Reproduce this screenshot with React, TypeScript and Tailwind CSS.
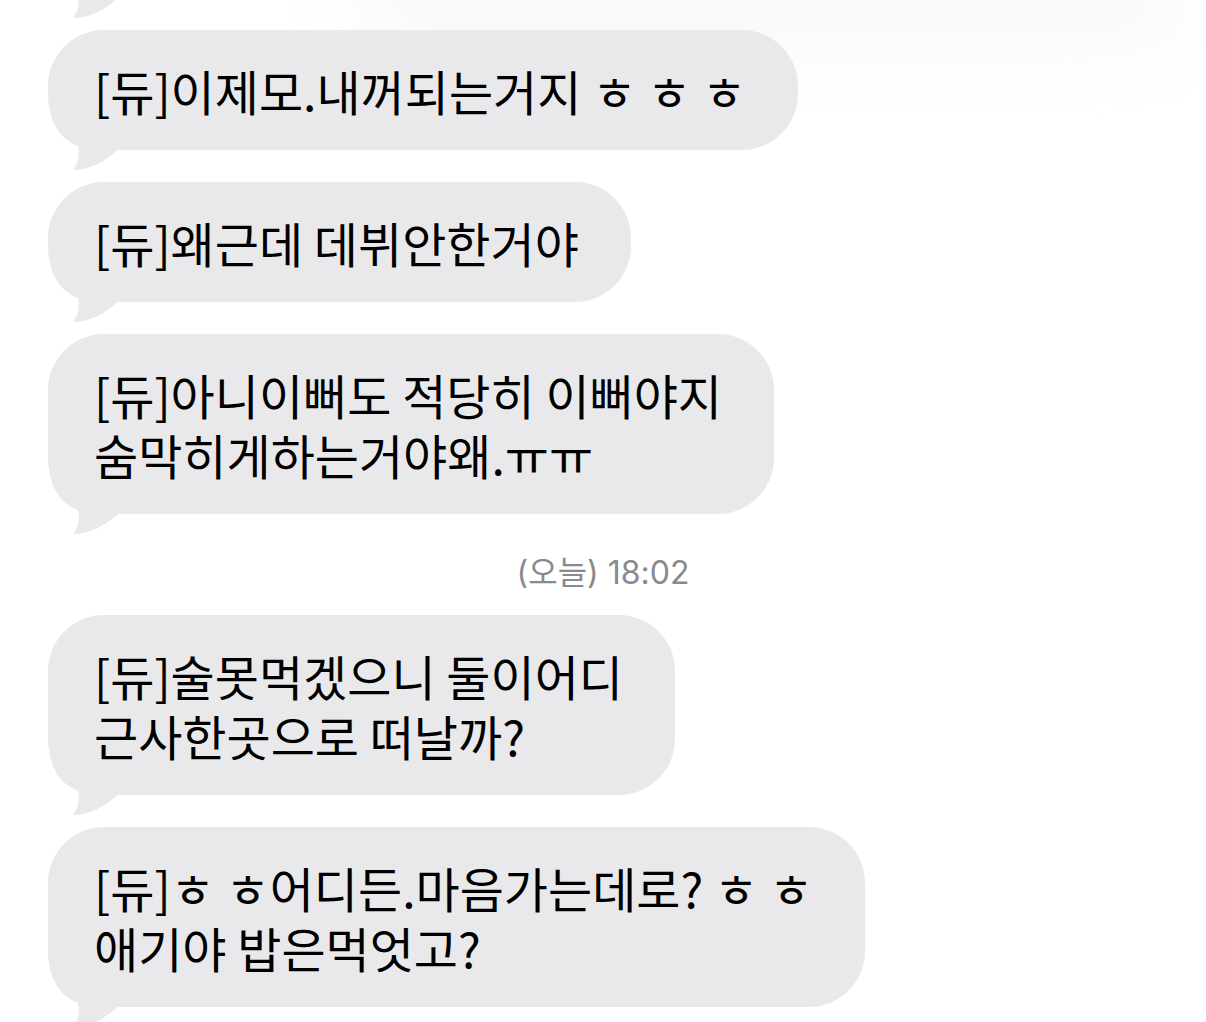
const bodyFont = {
  fontFamily: '"Noto Sans CJK KR", "Noto Sans", sans-serif',
};

function Tail() {
  return (
    <svg
      className="absolute left-0 bottom-[-22px]"
      width="72"
      height="82"
      viewBox="0 0 72 82"
      aria-hidden
    >
      <path
        d="M0 0 C0 30 10 48 30 56 C32 66 30 74 25 80 C42 80 56 72 70 60 L70 0 Z"
        fill="#e9e9eb"
      />
    </svg>
  );
}

function Bubble({ lines }: { lines: string[] }) {
  return (
    <div
      className="relative w-fit rounded-[56px] bg-[#e9e9eb] pl-[46px] pr-[52px] py-[30px] text-[48px] leading-[60px] text-black"
      style={bodyFont}
    >
      <Tail />
      <div className="relative">
        {lines.map((l, i) => (
          <div key={i} className="whitespace-nowrap">
            {l}
          </div>
        ))}
      </div>
    </div>
  );
}

export default function App() {
  return (
    <div className="relative h-[1022px] w-[1206px] overflow-hidden bg-white">
      {/* soft shade along the top edge */}
      <div className="absolute left-[360px] top-[-30px] h-[60px] w-[820px] rounded-full bg-[#f4f4f4] blur-2xl" />

      <div className="relative flex flex-col gap-[32px] pl-[48px]">
        {/* previous message, scrolled out above the top */}
        <div className="relative mt-[-122px] h-[120px] w-[700px] rounded-[56px] bg-[#e9e9eb]">
          <Tail />
        </div>

        <Bubble lines={["[듀]이제모.내꺼되는거지 ㅎ ㅎ ㅎ"]} />
        <Bubble lines={["[듀]왜근데 데뷔안한거야"]} />
        <Bubble lines={["[듀]아니이뻐도 적당히 이뻐야지", "숨막히게하는거야왜.ㅠㅠ"]} />

        <div
          className="mt-[7px] mb-[-10px] -ml-[48px] h-[40px] text-center text-[32px] leading-[40px] text-[#8a8a8e]"
          style={{ fontFamily: 'Inter, "Noto Sans CJK KR", sans-serif' }}
        >
          (오늘) 18:02
        </div>

        <Bubble lines={["[듀]술못먹겠으니 둘이어디", "근사한곳으로 떠날까?"]} />
        <Bubble lines={["[듀]ㅎ ㅎ어디든.마음가는데로? ㅎ ㅎ", "애기야 밥은먹엇고?"]} />
      </div>
    </div>
  );
}
